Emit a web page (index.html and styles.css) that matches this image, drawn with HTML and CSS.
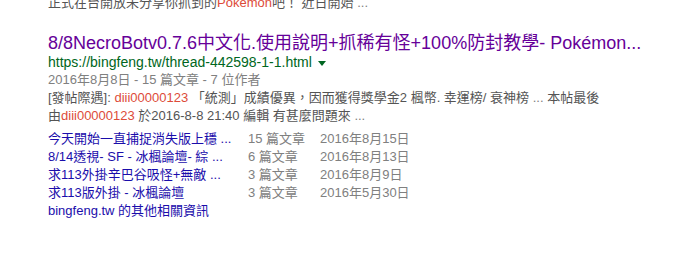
FILE: index.html
```html
<!DOCTYPE html>
<html lang="zh-Hant">
<head>
	<meta charset="UTF-8">
	<title>搜尋結果</title>
	<link rel="stylesheet" href="styles.css">
</head>
<body>
	<div class="results">
		<div class="prev">
			正式在台開放未分享你抓到的<em>Pokemon</em>吧！ 近日開始 <span class="dots">...</span>
		</div>
		<div class="result">
			<h3 class="title"><a href="javascript:;">8/8NecroBotv0.7.6中文化.使用說明+抓稀有怪+100%防封教學- Pokémon...</a></h3>
			<div class="url">https://bingfeng.tw/thread-442598-1-1.html <span class="arrow"></span></div>
			<div class="meta">2016年8月8日 - 15 篇文章 - 7 位作者</div>
			<div class="snippet">
				[發帖際遇]: <em>diii00000123</em> 「統測」成績優異，因而獲得獎學金2 楓幣. 幸運榜/ 衰神榜 <span class="dots">...</span> 本帖最後<br>
				由<em>diii00000123</em> 於2016-8-8 21:40 編輯 有甚麼問題來 <span class="dots">...</span>
			</div>
			<div class="sitelinks">
				<a href="javascript:;">今天開始一直捕捉消失版上穩 ...</a>
				<span class="count">15 篇文章</span>
				<span class="date">2016年8月15日</span>
				<a href="javascript:;">8/14透視- SF - 冰楓論壇- 綜 ...</a>
				<span class="count">6 篇文章</span>
				<span class="date">2016年8月13日</span>
				<a href="javascript:;">求113外掛辛巴谷吸怪+無敵 ...</a>
				<span class="count">3 篇文章</span>
				<span class="date">2016年8月9日</span>
				<a href="javascript:;">求113版外掛 - 冰楓論壇</a>
				<span class="count">3 篇文章</span>
				<span class="date">2016年5月30日</span>
			</div>
			<a class="more" href="javascript:;">bingfeng.tw 的其他相關資訊</a>
		</div>
	</div>
</body>
</html>
```

FILE: styles.css
```css
body {
	margin: 0;
	background: #fff;
	font-family: Arial, "Liberation Sans", "Noto Sans CJK TC", sans-serif;
	font-size: 13px;
	line-height: 18px;
	color: #545454;
}
a {
	text-decoration: none;
}
em {
	font-style: normal;
	color: #dd4b39;
}
.results {
	padding-left: 48px;
}
.prev {
	margin-top: -6px;
}
.dots {
	color: #808080;
}
.result {
	margin-top: 21px;
}
.title {
	margin: 0;
	font-size: 18px;
	font-weight: normal;
	line-height: 20px;
	white-space: nowrap;
}
.title a {
	color: #660099;
}
.url {
	color: #006621;
	font-size: 14px;
	line-height: 18px;
}
.arrow {
	display: inline-block;
	margin-left: 2px;
	vertical-align: middle;
	border-top: 5px solid #006621;
	border-left: 4px solid transparent;
	border-right: 4px solid transparent;
}
.meta {
	color: #808080;
}
.sitelinks {
	display: grid;
	grid-template-columns: 200px 72px auto;
	margin-top: 5px;
}
.sitelinks a,
.more {
	color: #1a0dab;
}
.count,
.date {
	color: #808080;
}
```
